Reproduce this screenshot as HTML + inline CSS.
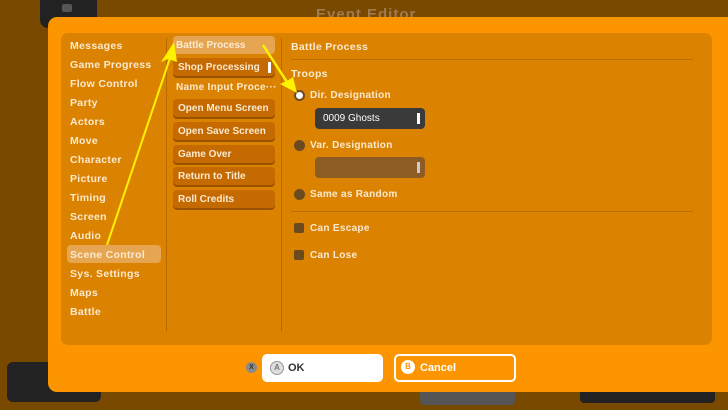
<!DOCTYPE html>
<html><head><style>
body{margin:0;width:728px;height:410px;overflow:hidden;background:#7a4900;font-family:"Liberation Sans",sans-serif;position:relative}
.a{position:absolute}
.t{position:absolute;color:#fbe9d0;font-size:10.5px;font-weight:bold;letter-spacing:.3px}
.btn{position:absolute;left:173px;width:102px;height:18px;background:#c46a00;border-radius:4px;box-shadow:0 2px 0 #9a5200;color:#fbe9d0;font-size:10px;font-weight:bold;line-height:19px;padding-left:5px;box-sizing:border-box}
.rad{position:absolute;width:11px;height:11px;border-radius:50%;background:#6b4a20}
.chk{position:absolute;width:10px;height:10px;border-radius:2px;background:#6b4a20}
</style></head><body>
<div class="a" style="left:40px;top:-6px;width:57px;height:34px;background:#222;border-radius:8px"></div>
<div class="a" style="left:62px;top:4px;width:10px;height:8px;background:#555;border-radius:2px"></div>
<div class="a" style="left:316px;top:6px;color:#a07a50;font-size:15px;font-weight:bold;letter-spacing:1px">Event Editor</div>
<div class="a" style="left:7px;top:362px;width:94px;height:40px;background:#222;border-radius:6px"></div>
<div class="a" style="left:420px;top:385px;width:95px;height:20px;background:#555;border-radius:4px"></div>
<div class="a" style="left:580px;top:385px;width:135px;height:18px;background:#222;border-radius:4px"></div>
<div class="a" style="left:48px;top:17px;width:690px;height:375px;background:#fc9500;border-radius:9px"></div>
<div class="a" style="left:61px;top:33px;width:651px;height:312px;background:#db8300;border-radius:7px"></div>
<div class="a" style="left:166px;top:38px;width:1px;height:293px;background:#b56a00"></div>
<div class="a" style="left:281px;top:38px;width:1px;height:293px;background:#b56a00"></div>
<div class="a" style="left:67px;top:245px;width:94px;height:18px;background:#e6a550;border-radius:4px"></div>
<div class="t" style="left:70px;top:40px">Messages</div>
<div class="t" style="left:70px;top:59px">Game Progress</div>
<div class="t" style="left:70px;top:78px">Flow Control</div>
<div class="t" style="left:70px;top:97px">Party</div>
<div class="t" style="left:70px;top:116px">Actors</div>
<div class="t" style="left:70px;top:135px">Move</div>
<div class="t" style="left:70px;top:154px">Character</div>
<div class="t" style="left:70px;top:173px">Picture</div>
<div class="t" style="left:70px;top:192px">Timing</div>
<div class="t" style="left:70px;top:211px">Screen</div>
<div class="t" style="left:70px;top:230px">Audio</div>
<div class="t" style="left:70px;top:249px">Scene Control</div>
<div class="t" style="left:70px;top:268px">Sys. Settings</div>
<div class="t" style="left:70px;top:287px">Maps</div>
<div class="t" style="left:70px;top:306px">Battle</div>
<div class="btn" style="top:36px;background:#e6a550;box-shadow:none;padding-left:3px">Battle Process</div>
<div class="btn" style="top:58px">Shop Processing<span style="position:absolute;right:4px;top:4px;width:3px;height:11px;background:#fff"></span></div>
<div class="t" style="left:176px;top:82px;font-size:10px">Name Input Proce···</div>
<div class="btn" style="top:99px">Open Menu Screen</div>
<div class="btn" style="top:122px">Open Save Screen</div>
<div class="btn" style="top:145px">Game Over</div>
<div class="btn" style="top:167px">Return to Title</div>
<div class="btn" style="top:190px">Roll Credits</div>
<div class="t" style="left:291px;top:41px">Battle Process</div>
<div class="a" style="left:291px;top:59px;width:402px;height:1px;background:#b86c00"></div>
<div class="t" style="left:291px;top:68px">Troops</div>
<div class="a" style="left:294px;top:90px;width:7px;height:7px;border-radius:50%;background:#fff;border:2px solid #6b4a20"></div>
<div class="t" style="left:310px;top:90px;font-size:10px">Dir. Designation</div>
<div class="a" style="left:315px;top:108px;width:110px;height:21px;background:#3a3a3a;border-radius:4px;color:#fff;font-size:10px;line-height:21px;padding-left:8px;box-sizing:border-box">0009 Ghosts<span style="position:absolute;right:5px;top:5px;width:3px;height:11px;background:#fff"></span></div>
<div class="rad" style="left:294px;top:140px"></div>
<div class="t" style="left:310px;top:140px;font-size:10px">Var. Designation</div>
<div class="a" style="left:315px;top:157px;width:110px;height:21px;background:#8c5c24;border-radius:4px"><span style="position:absolute;right:5px;top:5px;width:3px;height:11px;background:#ccc"></span></div>
<div class="rad" style="left:294px;top:189px"></div>
<div class="t" style="left:310px;top:189px;font-size:10px">Same as Random</div>
<div class="a" style="left:291px;top:211px;width:402px;height:1px;background:#b86c00"></div>
<div class="chk" style="left:294px;top:223px"></div>
<div class="t" style="left:310px;top:223px;font-size:10px">Can Escape</div>
<div class="chk" style="left:294px;top:250px"></div>
<div class="t" style="left:310px;top:250px;font-size:10px">Can Lose</div>
<div class="a" style="left:246px;top:362px;width:11px;height:11px;border-radius:50%;background:#888;color:#333;font-size:7px;text-align:center;line-height:11px;font-weight:bold">X</div>
<div class="a" style="left:262px;top:354px;width:121px;height:28px;background:#fff;border-radius:5px"></div>
<div class="a" style="left:270px;top:361px;width:12px;height:12px;border-radius:50%;border:1px solid #999;background:#ddd;color:#777;font-size:8px;text-align:center;line-height:12px;font-weight:bold">A</div>
<div class="a" style="left:288px;top:362px;color:#333;font-size:11px;font-weight:bold">OK</div>
<div class="a" style="left:394px;top:354px;width:122px;height:28px;border:2px solid #fff;border-radius:5px;box-sizing:border-box"></div>
<div class="a" style="left:401px;top:360px;width:14px;height:14px;border-radius:50%;background:#fff;color:#fc9500;font-size:8px;text-align:center;line-height:14px;font-weight:bold">B</div>
<div class="a" style="left:420px;top:362px;color:#fff;font-size:11px;font-weight:bold">Cancel</div>
<svg class="a" style="left:0;top:0" width="728" height="410">
<line x1="107" y1="245" x2="170" y2="58" stroke="#fff200" stroke-width="2"/>
<polygon points="174,42 161,62 168,59 177,62" fill="#fff200"/>
<line x1="263" y1="45" x2="287" y2="82" stroke="#fff200" stroke-width="2.5"/>
<polygon points="297,93 280,84 287,81 293,77" fill="#fff200"/>
</svg>
</body></html>
